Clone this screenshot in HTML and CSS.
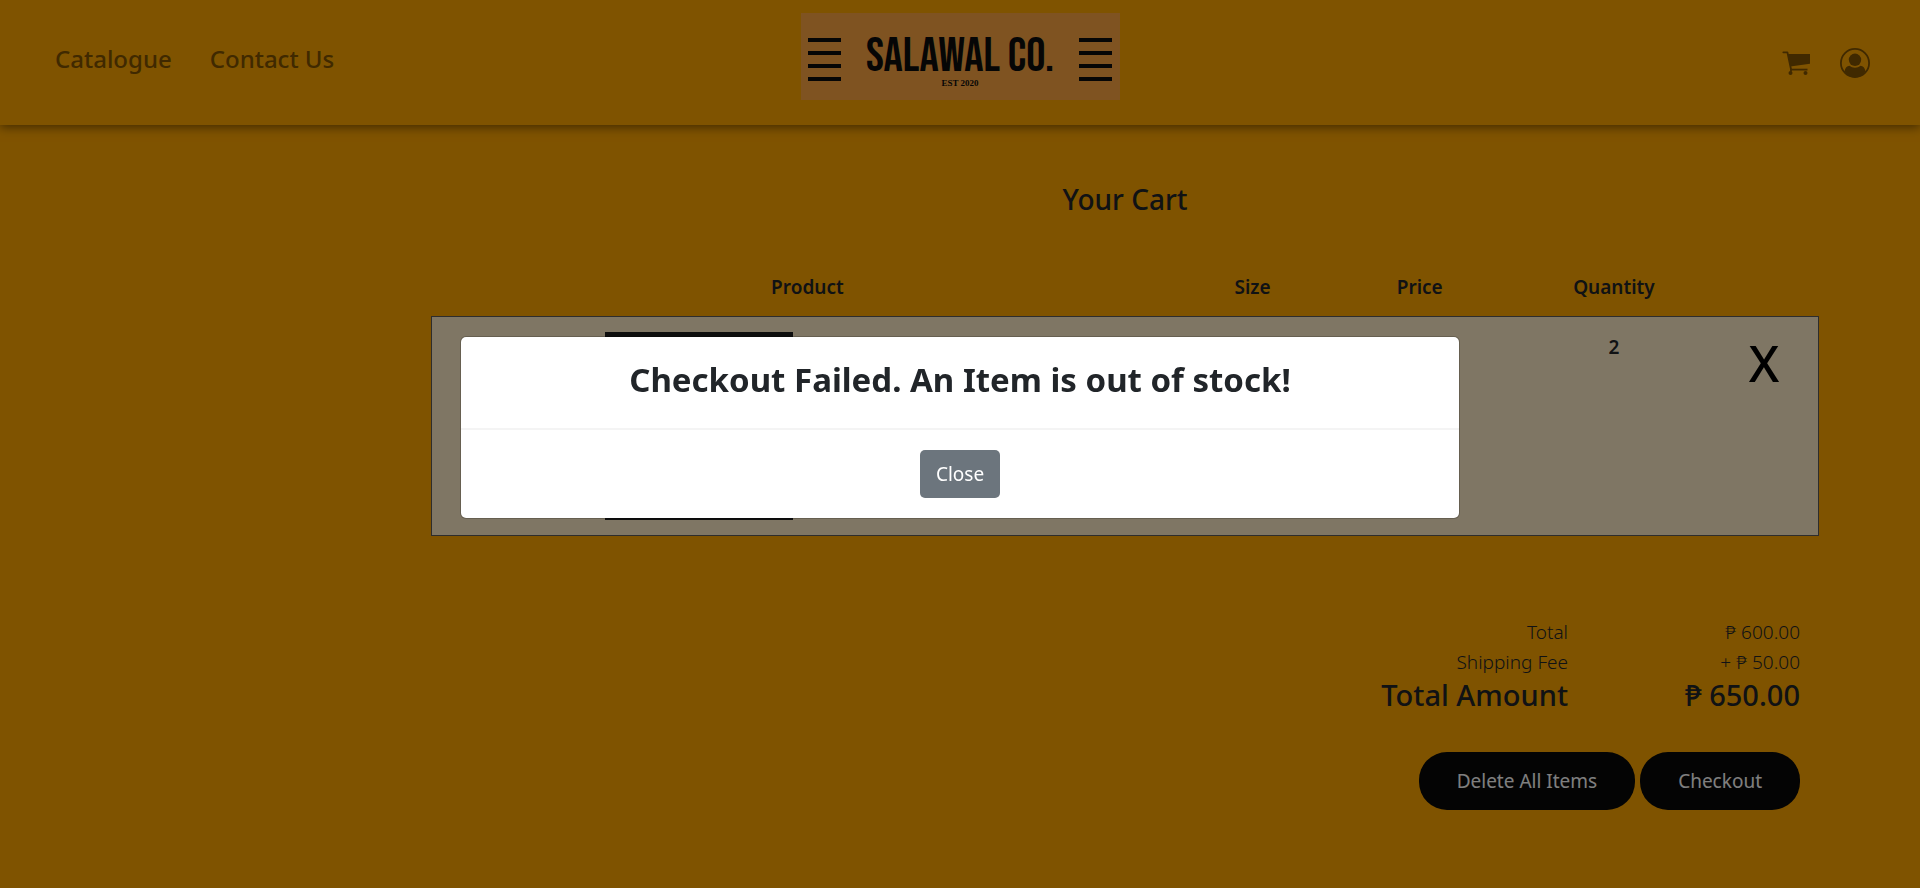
FILE: index.html
```html
<!DOCTYPE html>
<html lang="en">
<head>
<meta charset="utf-8">
<title>Salawal Co. - Your Cart</title>
<link rel="stylesheet" href="styles.css">
</head>
<body>
<header class="site-header">
  <nav class="nav-links">
    <a class="nav-link" href="#">Catalogue</a>
    <a class="nav-link" href="#">Contact Us</a>
  </nav>
  <a class="logo" href="#">
    <span class="logo-bars"><i></i><i></i><i></i><i></i></span>
    <span class="logo-words">
      <span class="logo-name">SALAWAL CO.</span>
      <span class="logo-est">EST 2020</span>
    </span>
    <span class="logo-bars"><i></i><i></i><i></i><i></i></span>
  </a>
  <div class="nav-icons">
    <a class="icon-link" href="#" aria-label="Cart">
      <svg width="28" height="24" viewBox="0 0 28 24">
        <path d="M1.3 1.3H5.4L9 18.2V20" fill="none" stroke="currentColor" stroke-width="1.8" stroke-linecap="round" stroke-linejoin="round"/>
        <path d="M6 3H28V12.8L8.300 15.400Z" fill="currentColor"/>
        <path d="M8 18.600H25.500" fill="none" stroke="currentColor" stroke-width="1.800"/>
        <circle cx="8.500" cy="22" r="2" fill="currentColor"/>
        <circle cx="23.500" cy="22" r="2" fill="currentColor"/>
      </svg>
    </a>
    <a class="icon-link" href="#" aria-label="Account">
      <svg width="30" height="30" viewBox="0 0 30 30">
        <circle cx="15" cy="15" r="14.100" fill="none" stroke="currentColor" stroke-width="1.800"/>
        <circle cx="15" cy="11.800" r="6.200" fill="currentColor"/>
        <path d="M4.500 23.500C5.200 20 6.800 18 9.500 17.800C12.500 20.300 17.500 20.300 20.500 17.800C23.200 18 24.800 20 25.500 23.500C20 31.500 10 31.500 4.500 23.500Z" fill="currentColor"/>
      </svg>
    </a>
  </div>
</header>

<main class="cart">
  <h1 class="cart-title">Your Cart</h1>
  <table class="cart-table">
    <colgroup>
      <col class="col-product"><col class="col-size"><col class="col-price"><col class="col-quantity"><col class="col-remove">
    </colgroup>
    <thead>
      <tr><th>Product</th><th>Size</th><th>Price</th><th>Quantity</th><td></td></tr>
    </thead>
    <tbody>
      <tr>
        <td><div class="product-image"></div></td>
        <td></td>
        <td>₱ 300.00</td>
        <td>2</td>
        <td><button class="remove" type="button">X</button></td>
      </tr>
    </tbody>
  </table>
  <dl class="totals">
    <dt>Total</dt><dd>₱ 600.00</dd>
    <dt>Shipping Fee</dt><dd>+ ₱ 50.00</dd>
    <dt class="grand">Total Amount</dt><dd class="grand">₱ 650.00</dd>
  </dl>
  <div class="actions">
    <button class="action" type="button">Delete All Items</button>
    <button class="action" type="button">Checkout</button>
  </div>
</main>

<div class="backdrop">
  <div class="modal" role="dialog" aria-modal="true" aria-labelledby="modal-title">
    <div class="modal-header"><h2 class="modal-title" id="modal-title">Checkout Failed. An Item is out of stock!</h2></div>
    <div class="modal-footer"><button class="close" type="button">Close</button></div>
  </div>
</div>
</body>
</html>
```
FILE: styles.css
```css
* { box-sizing: border-box; }

body {
  margin: 0;
  min-height: 100vh;
  background: #ffa600;
  color: #212529;
  font-family: "Segoe UI", "Noto Sans", "Open Sans", sans-serif;
  font-size: 19px;
  line-height: 30px;
}

a { color: inherit; text-decoration: none; }
button { font: inherit; cursor: pointer; }

.site-header {
  display: grid;
  grid-template-columns: 1fr auto 1fr;
  align-items: start;
  height: 125px;
  padding: 13px 50px 0;
  box-shadow: 0 2px 10px rgba(0, 0, 0, 0.5);
}

.nav-links { display: flex; gap: 38px; padding: 31px 0 0 5px; }
.nav-link { color: #805300; font-size: 24px; font-weight: 500; }

.logo {
  display: flex;
  justify-content: space-between;
  width: 319px;
  height: 87px;
  padding: 25px 7px 0;
  background: #ffa642;
  color: #0c0c0c;
}
.logo-bars { display: grid; gap: 9px; align-content: start; width: 33px; }
.logo-bars i { height: 4px; background: currentColor; }
.logo-words { display: flex; flex-direction: column; align-items: center; }
.logo-name {
  font-family: "Bebas Neue", "Roboto Condensed", "Liberation Sans Narrow", sans-serif;
  font-size: 48px;
  font-weight: 400;
  line-height: 38px;
}
.logo-est {
  font-family: "Liberation Serif", serif;
  font-size: 9px;
  font-weight: 700;
  line-height: 14px;
}

.nav-icons {
  display: flex;
  justify-content: flex-end;
  align-items: center;
  gap: 30px;
  padding-top: 35px;
  color: #805300;
}
.icon-link { display: flex; }

.cart { width: 1388px; max-width: 75%; margin: 0 101px 0 auto; padding-top: 56px; }
.cart-title { margin: 0 0 53px; font-size: 28px; font-weight: 500; line-height: 36px; text-align: center; }

.cart-table { width: 100%; table-layout: fixed; border-collapse: collapse; font-weight: 600; text-align: center; }
.cart-table th { padding: 2px 0 14px; font-weight: 600; }
.cart-table tbody tr { border: 1px solid #5a5a5a; background: #ffedc8; }
.cart-table tbody td { padding: 15px 0; vertical-align: top; }
.col-product { width: 54.2%; }
.col-size { width: 10%; }
.col-price { width: 14.1%; }
.col-quantity { width: 13.9%; }
.col-remove { width: 7.8%; }
.product-image { width: 188px; height: 188px; margin-left: 173px; background: #1c1c1c; }
.remove { padding: 0; border: 0; background: none; color: #000; font-size: 50px; font-weight: 500; line-height: 63px; }

.totals {
  display: grid;
  grid-template-columns: 1fr 232px;
  margin: 81px 19px 0 0;
  font-weight: 300;
  text-align: right;
}
.totals dd { margin: 0; }
.totals .grand { font-size: 29px; font-weight: 500; line-height: 36px; }

.actions { display: flex; justify-content: flex-end; gap: 5px; margin: 39px 19px 0 0; }
.action {
  height: 58px;
  padding: 0 38px;
  border: 0;
  border-radius: 28px;
  background: #080808;
  color: #fff;
}

.backdrop {
  position: fixed;
  inset: 0;
  display: flex;
  align-items: center;
  justify-content: center;
  padding-bottom: 33px;
  background: rgba(0, 0, 0, 0.5);
}
.modal {
  width: 1000px;
  border: 1px solid rgba(0, 0, 0, 0.2);
  border-radius: 6px;
  background: #fff;
  background-clip: padding-box;
}
.modal-header { padding: 20px 20px 26px; border-bottom: 2px solid #f4f4f4; }
.modal-title { margin: 0; font-size: 33px; font-weight: 700; line-height: 45px; text-align: center; }
.modal-footer { display: flex; justify-content: center; padding: 20px; }
.close { height: 48px; padding: 0 16px; border: 0; border-radius: 5px; background: #6c757d; color: #fff; }
```
